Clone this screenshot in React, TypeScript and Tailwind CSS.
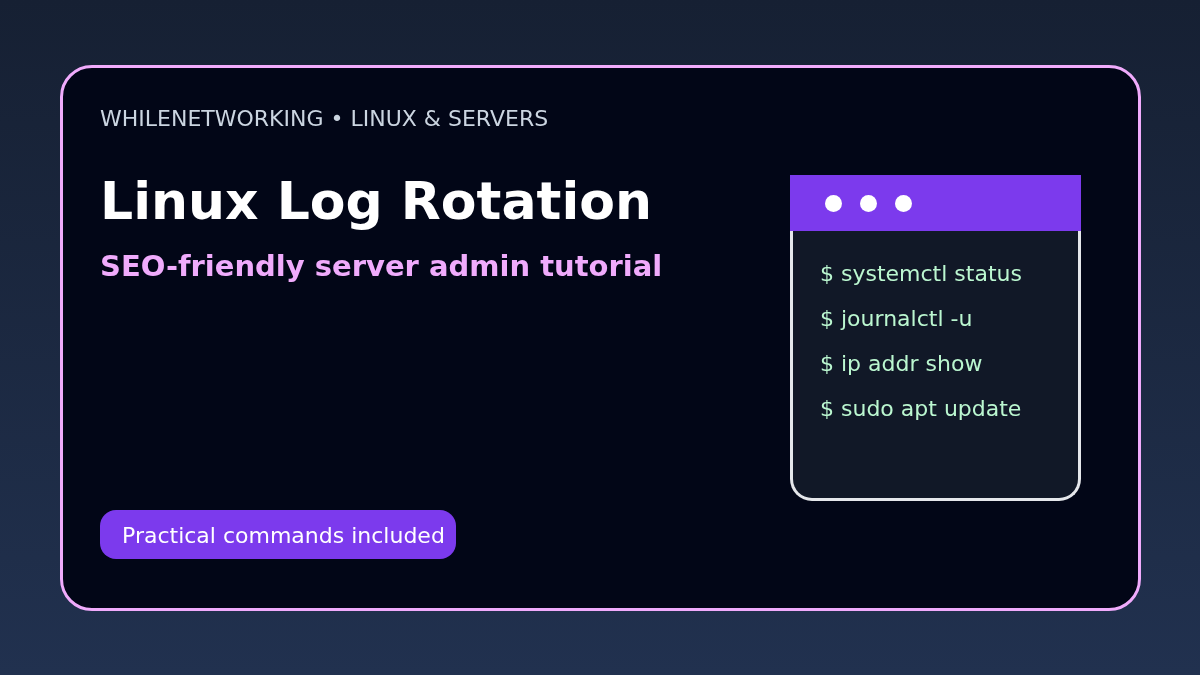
const font = "font-['DejaVu_Sans','Liberation_Sans',sans-serif]"

const commands = ['$ systemctl status', '$ journalctl -u', '$ ip addr show', '$ sudo apt update']

export default function App() {
  return (
    <div className={`w-[1200px] h-[675px] overflow-hidden bg-gradient-to-b from-[#162033] to-[#21314f] pt-[65px] pl-[60px] [will-change:transform] ${font}`}>
      <div className="w-[1081px] h-[546px] border-[3px] border-[#f0abfc] rounded-[32px] bg-[#020617] flex justify-between pl-[37px] pr-[57px]">
        <div className="flex flex-col">
          <div className="mt-[37px] text-[22px] leading-[28px] text-[#cbd5e1]">WHILENETWORKING • LINUX &amp; SERVERS</div>
          <h1 className="mt-[37px] text-[52px] leading-[62px] font-bold text-white">Linux Log Rotation</h1>
          <div className="mt-[16px] text-[29px] leading-[36px] font-bold text-[#f0abfc]">SEO-friendly server admin tutorial</div>
          <div className="mt-auto mb-[49px] w-[356px] h-[49px] rounded-[16px] bg-[#7c3aed] pl-[22px] pt-[2px] flex items-center text-[22px] text-white whitespace-nowrap">
            Practical commands included
          </div>
        </div>
        <div className="mt-[107px] w-[291px] h-[326px] flex flex-col">
          <div className="h-[56px] bg-[#7c3aed] flex items-center gap-[18px] pl-[35px]">
            <span className="w-[17px] h-[17px] rounded-full bg-white" />
            <span className="w-[17px] h-[17px] rounded-full bg-white" />
            <span className="w-[17px] h-[17px] rounded-full bg-white" />
          </div>
          <div className="flex-1 bg-[#111827] border-x-[3px] border-b-[3px] border-[#e5e7eb] rounded-b-[22px] pl-[27px] pt-[29px] flex flex-col gap-[17px]">
            {commands.map((c) => (
              <div key={c} className="text-[22px] leading-[28px] text-[#bbf7d0]">{c}</div>
            ))}
          </div>
        </div>
      </div>
    </div>
  )
}
